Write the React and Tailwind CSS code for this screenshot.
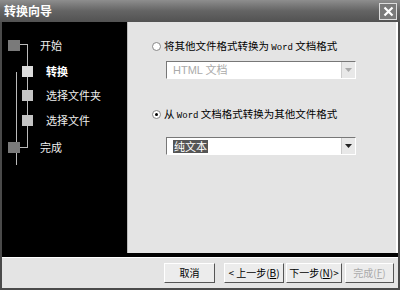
import React from "react";

const cjk = { fontFamily: '"Noto Sans CJK SC", "Liberation Sans", sans-serif' };
const mono = { fontFamily: '"Liberation Mono", "DejaVu Sans Mono", monospace' };

function Radio({ checked }) {
  return (
    <span className="relative inline-block w-[9px] h-[9px] rounded-full border border-[#888] bg-white shrink-0">
      {checked && <span className="absolute left-[2px] top-[2px] w-[3px] h-[3px] rounded-full bg-black" />}
    </span>
  );
}

function Select({ disabled, children }) {
  return (
    <div className="flex w-[190px] h-[18px] border border-t-[#777] border-l-[#777] border-b-[#fff] border-r-[#fff] bg-white">
      <div className="flex-1 flex items-center pl-[6px]">{children}</div>
      <div className="w-[14px] h-full flex items-center justify-center bg-[#e8e8e8] border-l border-[#ccc]">
        <svg width="7" height="4" viewBox="0 0 7 4">
          <path d="M0 0 L7 0 L3.5 4 Z" fill={disabled ? "#aaa" : "#222"} />
        </svg>
      </div>
    </div>
  );
}

function Btn({ children, disabled, w }) {
  return (
    <div
      className={`h-[20px] flex items-center justify-center whitespace-nowrap text-[10px] leading-none bg-[#ececec] border border-t-white border-l-white border-r-[#555] border-b-[#555] ${w} ${disabled ? "text-[#aaa]" : "text-black"}`}
      style={cjk}
    >
      {children}
    </div>
  );
}

export default function App() {
  return (
    <div className="w-[400px] h-[290px] bg-[#4a4a4a] flex flex-col overflow-hidden" style={cjk}>
      {/* title bar */}
      <div className="h-[22px] flex items-center justify-between pl-[4px] pr-[3px] bg-gradient-to-b from-[#8e8e8e] via-[#646464] to-[#525252]">
        <span className="text-white text-[12px] font-bold leading-none">转换向导</span>
        <div className="w-[18px] h-[17px] border border-[#ddd] bg-[#7a7a7a] flex items-center justify-center">
          <svg width="11" height="11" viewBox="0 0 11 11">
            <path d="M1.5 1.5 L9.5 9.5 M9.5 1.5 L1.5 9.5" stroke="#fff" strokeWidth="2.2" />
          </svg>
        </div>
      </div>
      {/* body */}
      <div className="flex-1 flex flex-col mx-[2px] mb-[2px] bg-[#e4e4e4]">
        <div className="h-[231px] flex">
          {/* left black panel */}
          <div className="w-[125px] bg-black relative">
            <div className="absolute left-[14px] top-[50px] w-[1px] h-[93px] bg-[#bbb]" />
            <div className="absolute left-[25px] top-[22px] w-[1px] h-[103px] bg-[#bbb]" />
            <div className="absolute left-[17px] top-[22px] w-[9px] h-[1px] bg-[#bbb]" />
            <div className="absolute left-[17px] top-[125px] w-[9px] h-[1px] bg-[#bbb]" />
            <div className="absolute left-[6px] top-[18px] w-[12px] h-[11px] bg-[#7a7a7a]" />
            <div className="absolute left-[20px] top-[44px] w-[11px] h-[11px] bg-[#dcdcdc]" />
            <div className="absolute left-[20px] top-[68px] w-[11px] h-[11px] bg-[#c4c4c4]" />
            <div className="absolute left-[20px] top-[93px] w-[11px] h-[11px] bg-[#c4c4c4]" />
            <div className="absolute left-[6px] top-[120px] w-[12px] h-[11px] bg-[#7a7a7a]" />
            <span className="absolute left-[38px] top-[16px] text-[11px] text-[#eee] leading-[14px]">开始</span>
            <span className="absolute left-[44px] top-[42px] text-[11px] text-white font-bold leading-[14px]">转换</span>
            <span className="absolute left-[44px] top-[66px] text-[11px] text-[#eee] leading-[14px]">选择文件夹</span>
            <span className="absolute left-[44px] top-[91px] text-[11px] text-[#eee] leading-[14px]">选择文件</span>
            <span className="absolute left-[38px] top-[118px] text-[11px] text-[#eee] leading-[14px]">完成</span>
          </div>
          {/* right panel */}
          <div className="flex-1 border-l border-[#bbb] border-r-2 border-r-white pl-[24px] pt-[18px] flex flex-col">
            <div className="flex items-center gap-[3px] h-[13px]">
              <Radio />
              <span className="text-[10.5px] leading-none text-black whitespace-nowrap">
                将其他文件格式转换为 <span style={mono} className="text-[9px]">Word</span> 文档格式
              </span>
            </div>
            <div className="mt-[8px] ml-[14px]">
              <Select disabled>
                <span className="text-[11px] text-[#aaa]" style={{ fontFamily: '"Liberation Sans", "Noto Sans CJK SC", sans-serif' }}>HTML 文档</span>
              </Select>
            </div>
            <div className="flex items-center gap-[3px] h-[13px] mt-[29px]">
              <Radio checked />
              <span className="text-[10.5px] leading-none text-black whitespace-nowrap">
                从 <span style={mono} className="text-[9px]">Word</span> 文档格式转换为其他文件格式
              </span>
            </div>
            <div className="mt-[16px] ml-[14px]">
              <Select>
                <span className="text-[11px] text-white bg-[#555] px-[1px] leading-[13px]">纯文本</span>
              </Select>
            </div>
          </div>
        </div>
        <div className="h-[4px] bg-black" />
        <div className="flex-1 border-t border-white flex items-center justify-end pr-[4px]">
          <Btn w="w-[51px] mr-[9px]">取消</Btn>
          <Btn w="w-[60px] mr-[2px]">&lt; 上一步(<u>B</u>)</Btn>
          <Btn w="w-[56px] mr-[3px]">下一步(<u>N</u>)&gt;</Btn>
          <Btn w="w-[49px]" disabled>完成(<u>F</u>)</Btn>
        </div>
      </div>
    </div>
  );
}
